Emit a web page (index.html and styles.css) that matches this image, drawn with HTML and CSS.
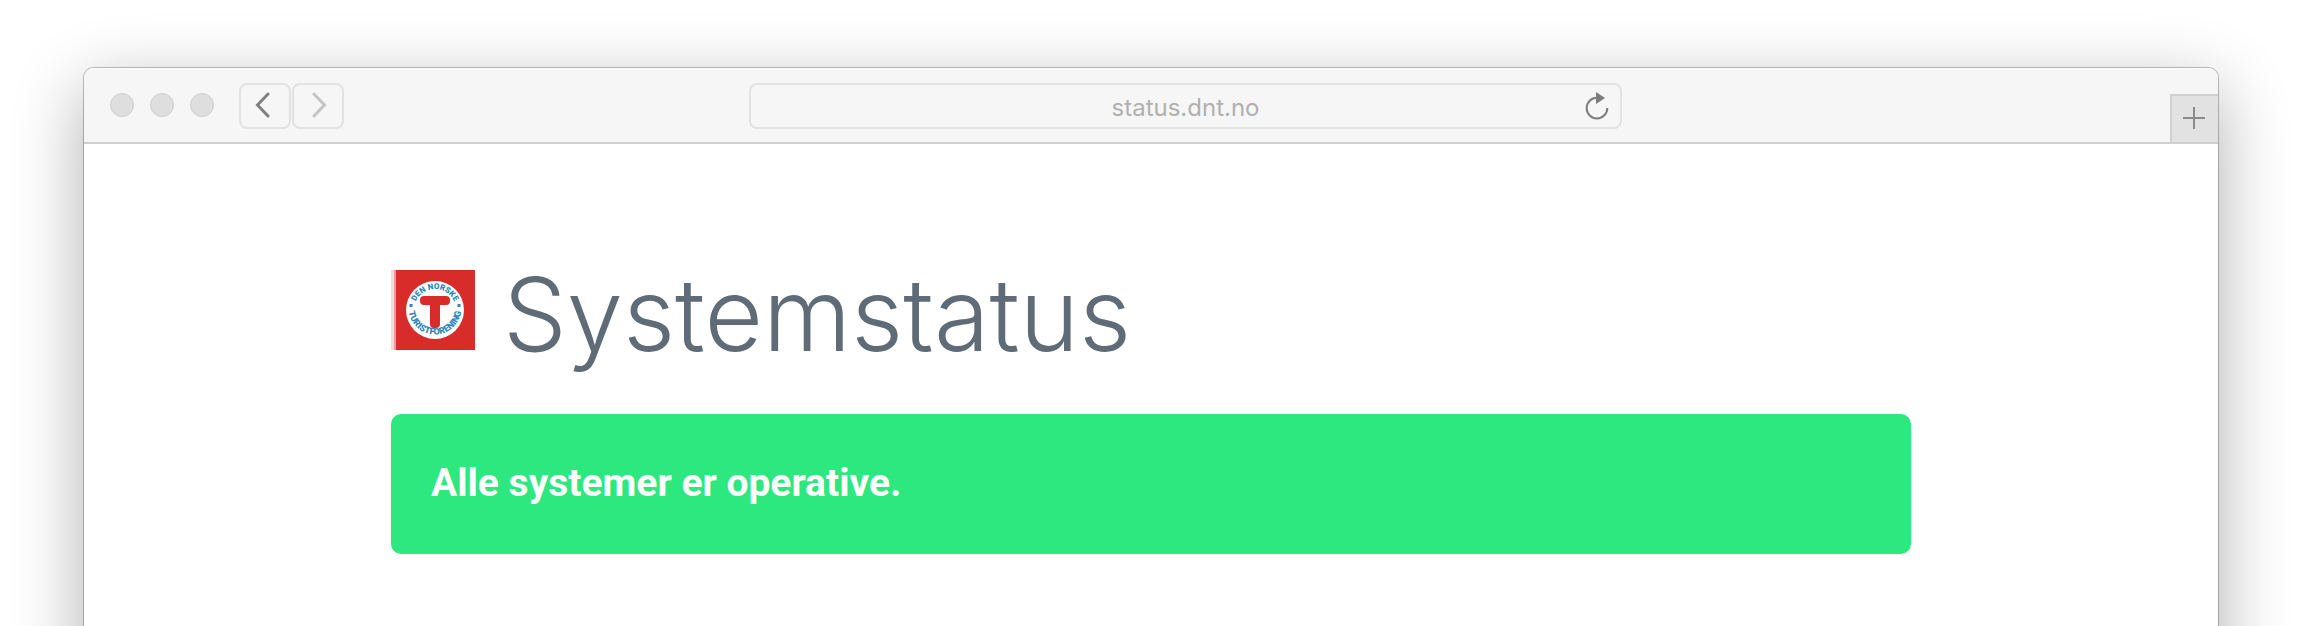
FILE: index.html
```html
<!DOCTYPE html>
<html lang="no">
<head>
<meta charset="utf-8">
<meta name="viewport" content="width=device-width, initial-scale=1">
<title>Systemstatus</title>
<link rel="stylesheet" href="styles.css">
</head>
<body>
<div class="desktop">
<div class="window">
  <header class="toolbar">
    <div class="controls">
      <div class="lights">
        <span class="light"></span>
        <span class="light"></span>
        <span class="light"></span>
      </div>
      <nav class="history">
        <button class="nav-button" type="button" aria-label="Back">
          <svg width="16" height="26" viewBox="0 0 16 26"><path d="M13 2 2.500 13 13 24"/></svg>
        </button>
        <button class="nav-button nav-button-disabled" type="button" aria-label="Forward">
          <svg width="16" height="26" viewBox="0 0 16 26"><path d="M3 2 13.500 13 3 24"/></svg>
        </button>
      </nav>
    </div>
    <div class="address">
      <input class="address-input" type="text" aria-label="Address" value="status.dnt.no">
      <button class="reload" type="button" aria-label="Reload">
        <svg width="24" height="28" viewBox="0 0 24 28"><path class="reload-ring" d="M12 5.800A10.300 10.300 0 1 0 22.300 16"/><path class="reload-head" d="M11 0v12l9-6z"/></svg>
      </button>
    </div>
    <div class="tabs">
      <button class="new-tab" type="button" aria-label="New tab">
        <svg width="22" height="22" viewBox="0 0 22 22"><path d="M11 0v22M0 11h22"/></svg>
      </button>
    </div>
  </header>
  <main class="page">
    <div class="heading">
      <svg class="logo" width="84" height="80" viewBox="0 0 84 80" role="img" aria-label="Den Norske Turistforening">
        <defs>
          <path id="upper" d="M23 40a21 21 0 0 1 42 0"/>
          <path id="lower" d="M17.500 32v6a26.500 26.500 0 0 0 53 0v-6"/>
        </defs>
        <path fill="#f7d9da" d="M0 0h4v80H0z"/>
        <path fill="#ee9a9b" d="M3 0h2v80H3z"/>
        <path fill="#d82c2a" d="M5 0h79v80H5z"/>
        <circle cx="44" cy="40" r="29" fill="#fff"/>
        <path fill="#d82c2a" d="M33 26h22a4 4 0 0 1 4 4v1a4 4 0 0 1-4 4h-6v19a4 4 0 0 1-4 4h-2a4 4 0 0 1-4-4V35h-6a4 4 0 0 1-4-4v-1a4 4 0 0 1 4-4z"/>
        <path fill="#2f86bd" d="M18.500 34h3v3h-3zM66.500 34h3v3h-3z"/>
        <text class="logo-text"><textPath href="#upper" startOffset="50%" text-anchor="middle">DEN NORSKE</textPath></text>
        <text class="logo-text logo-text-lower"><textPath href="#lower" startOffset="50%" text-anchor="middle">TURISTFORENING</textPath></text>
      </svg>
      <h1 class="title">Systemstatus</h1>
    </div>
    <p class="banner">Alle systemer er operative.</p>
  </main>
</div>
</div>
</body>
</html>
```
FILE: styles.css
```css
* {
  box-sizing: border-box;
}

body {
  margin: 0;
  background: #fff;
  font-family: Roboto, "Liberation Sans", sans-serif;
}

button {
  padding: 0;
  border: 0;
  background: none;
}

svg {
  display: block;
  fill: none;
}

.desktop {
  height: 100vh;
  padding: 68px 84px 0;
  overflow: hidden;
}

.window {
  min-height: 120vh;
  border-radius: 10px;
  background: #fff;
  box-shadow: 0 0 0 1px rgba(0, 0, 0, 0.24), 0 20px 70px rgba(0, 0, 0, 0.32);
}

.toolbar {
  display: grid;
  grid-template-columns: 665fr 873fr 596fr;
  height: 76px;
  border-bottom: 2px solid #d0d0d0;
  border-radius: 10px 10px 0 0;
  background: #f6f6f6;
  box-shadow: inset 0 1px #fff;
}

.controls {
  display: flex;
  align-items: flex-start;
  gap: 25px;
  padding: 15px 0 0 26px;
}

.lights {
  display: flex;
  gap: 16px;
  padding-top: 10px;
}

.light {
  width: 24px;
  height: 24px;
  border: 1px solid #cfcfcf;
  border-radius: 50%;
  background: #dedede;
}

.history {
  display: flex;
  gap: 1px;
}

.nav-button {
  display: grid;
  place-items: center;
  width: 52px;
  height: 46px;
  padding-right: 5px;
  padding-bottom: 2px;
  border: 2px solid #e2e2e2;
  border-radius: 8px;
  stroke: #808080;
  stroke-width: 3px;
  stroke-linecap: round;
}

.nav-button-disabled {
  padding: 0 0 2px 2px;
  stroke: #c4c4c4;
}

.address {
  display: flex;
  height: 46px;
  margin-top: 15px;
  padding-left: 46px;
  border: 2px solid #e2e2e2;
  border-radius: 8px;
}

.address-input {
  flex: 1;
  min-width: 0;
  padding: 2px 0 0;
  border: 0;
  background: none;
  color: #b0b0b0;
  font-family: Inter, sans-serif;
  font-size: 24px;
  text-align: center;
}

.reload {
  display: grid;
  place-items: center;
  width: 46px;
}

.reload-ring {
  stroke: #7d7d7d;
  stroke-width: 2px;
}

.reload-head {
  fill: #7d7d7d;
}

.tabs {
  display: flex;
  justify-content: flex-end;
  align-items: flex-end;
}

.new-tab {
  display: grid;
  place-items: center;
  width: 48px;
  height: 48px;
  padding: 0 2px 2px 0;
  border: solid #d0d0d0;
  border-width: 2px 0 0 2px;
  background: #e2e2e2;
  stroke: #8b8b8b;
  stroke-width: 2px;
}

.page {
  width: min(1520px, 90%);
  margin: 0 auto;
  padding-top: 110px;
}

.heading {
  display: flex;
  align-items: flex-start;
  gap: 28px;
  margin-bottom: 40px;
}

.logo {
  flex: none;
  margin-top: 16px;
}

.logo-text {
  fill: #2f86bd;
  font-family: Roboto, sans-serif;
  font-size: 8px;
  font-weight: 900;
}

.logo-text-lower {
  font-size: 9px;
}

.title {
  margin: 0;
  color: #5f6c77;
  font-family: Inter, sans-serif;
  font-size: 101px;
  font-weight: 300;
  line-height: 120px;
}

.banner {
  margin: 0;
  padding: 39px 40px 41px;
  border-radius: 10px;
  background: #2ce87e;
  color: #fff;
  font-size: 39px;
  font-weight: 700;
  line-height: 60px;
}
```
